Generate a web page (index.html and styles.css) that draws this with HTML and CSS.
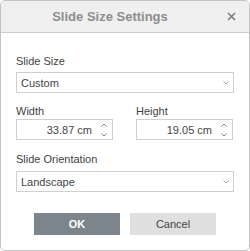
FILE: index.html
```html
<!DOCTYPE html>
<html lang="en">
<head>
    <meta charset="UTF-8">
    <title>Slide Size Settings</title>
    <link rel="stylesheet" href="styles.css">
</head>
<body>
    <div class="dialog">
        <div class="dialog-header">
            <span class="dialog-title">Slide Size Settings</span>
            <svg class="close-icon" width="9" height="9" viewBox="0 0 9 9">
                <path d="M1 1 L8 8 M8 1 L1 8" stroke="#7b7b7b" stroke-width="1.5" fill="none"/>
            </svg>
        </div>

        <div class="dialog-body">
            <label class="field-label first">Slide Size</label>
            <div class="select">
                <span>Custom</span>
                <svg class="chevron" width="6" height="4" viewBox="0 0 6 4">
                    <path d="M0.5 0.5 L3 3 L5.5 0.5" stroke="#a0a0a0" fill="none"/>
                </svg>
            </div>

            <div class="size-row">
                <div class="size-col">
                    <label class="field-label">Width</label>
                    <div class="spin-input">
                        <span class="spin-value">33.87 cm</span>
                        <div class="spin-buttons">
                            <svg width="6" height="4" viewBox="0 0 6 4"><path d="M0.5 3.5 L3 1 L5.5 3.5" stroke="#808080" fill="none"/></svg>
                            <svg width="6" height="4" viewBox="0 0 6 4"><path d="M0.5 0.5 L3 3 L5.5 0.5" stroke="#808080" fill="none"/></svg>
                        </div>
                    </div>
                </div>
                <div class="size-col">
                    <label class="field-label">Height</label>
                    <div class="spin-input">
                        <span class="spin-value">19.05 cm</span>
                        <div class="spin-buttons">
                            <svg width="6" height="4" viewBox="0 0 6 4"><path d="M0.5 3.5 L3 1 L5.5 3.5" stroke="#808080" fill="none"/></svg>
                            <svg width="6" height="4" viewBox="0 0 6 4"><path d="M0.5 0.5 L3 3 L5.5 0.5" stroke="#808080" fill="none"/></svg>
                        </div>
                    </div>
                </div>
            </div>

            <label class="field-label orientation">Slide Orientation</label>
            <div class="select">
                <span>Landscape</span>
                <svg class="chevron" width="6" height="4" viewBox="0 0 6 4">
                    <path d="M0.5 0.5 L3 3 L5.5 0.5" stroke="#a0a0a0" fill="none"/>
                </svg>
            </div>

            <div class="buttons">
                <button class="btn btn-primary">OK</button>
                <button class="btn btn-secondary">Cancel</button>
            </div>
        </div>
    </div>
</body>
</html>
```

FILE: styles.css
```css
:root {
    --border-color: #cfcfcf;
    --text-color: #444444;
    --header-bg: #efefef;
}

* {
    margin: 0;
    padding: 0;
    box-sizing: border-box;
}

body {
    font-family: "Liberation Sans", Arial, sans-serif;
    font-size: 11px;
    color: var(--text-color);
    background: #ffffff;
}

.dialog {
    width: 250px;
    height: 251px;
    border: 1px solid #c4c4c4;
    border-radius: 5px;
    overflow: hidden;
    background: #ffffff;
}

.dialog-header {
    height: 32px;
    background: var(--header-bg);
    border-bottom: 1px solid #cbcbcb;
    display: flex;
    align-items: center;
    justify-content: center;
    position: relative;
    padding-right: 30px;
}

.dialog-title {
    font-size: 13px;
    font-weight: bold;
    color: #8d8d8d;
}

.close-icon {
    position: absolute;
    right: 13px;
    top: 11px;
}

.dialog-body {
    padding: 21px 15px 0 15px;
}

.field-label {
    display: block;
    line-height: 14px;
    color: #3f3f3f;
    margin-top: 11px;
    margin-bottom: 1px;
}

.field-label.first {
    margin-top: 0;
    margin-bottom: 4px;
}

.field-label.orientation {
    margin-top: 12px;
    margin-bottom: 5px;
}

.select {
    height: 21px;
    border: 1px solid var(--border-color);
    display: flex;
    align-items: center;
    justify-content: space-between;
    padding: 0 4px 0 4px;
}

.chevron {
    margin-top: 1px;
}

.size-row {
    display: flex;
    justify-content: space-between;
}

.size-col {
    width: 97px;
}

.size-col + .size-col {
    margin-right: 1px;
}

.spin-input {
    height: 21px;
    border: 1px solid var(--border-color);
    display: flex;
    align-items: center;
    justify-content: flex-end;
    padding-right: 5px;
}

.spin-value {
    margin-right: 9px;
}

.spin-buttons {
    display: flex;
    flex-direction: column;
    gap: 6px;
}

.spin-buttons svg {
    display: block;
}

.buttons {
    display: flex;
    justify-content: center;
    gap: 10px;
    margin-top: 21px;
}

.btn {
    width: 86px;
    height: 22px;
    border: none;
    font-family: "Liberation Sans", Arial, sans-serif;
    font-size: 11px;
}

.btn-primary {
    background: #7d858c;
    color: #ffffff;
    font-weight: bold;
}

.btn-secondary {
    background: #dfdfdf;
    color: var(--text-color);
}
```
